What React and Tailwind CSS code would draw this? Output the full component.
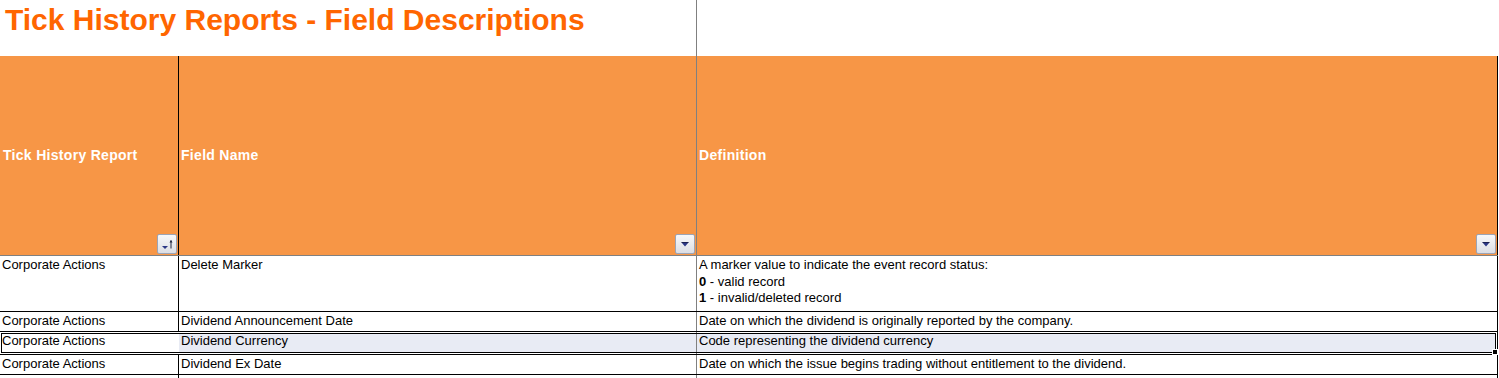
import React from 'react';

const font = "font-['Liberation_Sans',Arial,sans-serif]";

function FilterButton({ sort }) {
  return (
    <div className="absolute bottom-[1px] right-[1px] w-[20px] h-[20px] rounded-[2px] border border-[#9ca4b6] bg-gradient-to-b from-[#f7f8fa] to-[#dcdee4]">
      {sort ? (
        <svg width="18" height="18" viewBox="0 0 18 18">
          <path d="M4 11H10L7 14Z" fill="#2b3785" />
          <path d="M13 5.5V13.5" stroke="#1f2540" strokeWidth="1" />
          <path d="M11.5 7.5L13 5L14.5 7.5Z" fill="#1f2540" />
        </svg>
      ) : (
        <svg width="18" height="18" viewBox="0 0 18 18">
          <path d="M5.5 7.5H12.5L9 11.5Z" fill="#2b3785" />
          <path d="M5.5 7.5H12.5" stroke="#1a2050" strokeWidth="1" />
        </svg>
      )}
    </div>
  );
}

const rows = [
  {
    a: 'Corporate Actions',
    b: 'Delete Marker',
    c: (
      <>
        A marker value to indicate the event record status:
        <br />
        <span className="font-bold">0</span> - valid record
        <br />
        <span className="font-bold">1</span> - invalid/deleted record
      </>
    ),
    h: 'h-[56px]',
  },
  {
    a: 'Corporate Actions',
    b: 'Dividend Announcement Date',
    c: 'Date on which the dividend is originally reported by the company.',
    h: 'h-[20px]',
  },
  {
    a: 'Corporate Actions',
    b: 'Dividend Currency',
    c: 'Code representing the dividend currency',
    h: 'h-[23px]',
    selected: true,
  },
  {
    a: 'Corporate Actions',
    b: 'Dividend Ex Date',
    c: 'Date on which the issue begins trading without entitlement to the dividend.',
    h: 'h-[20px]',
  },
];

function Row({ row }) {
  if (row.selected) {
    return (
      <div className={`relative flex w-[1498px] border-b border-black ${row.h}`}>
        <div className="w-[179px] shrink-0">
          <div className="my-[1px] h-[20px] bg-white pl-[2px] leading-[16.5px] whitespace-nowrap">{row.a}</div>
        </div>
        <div className="w-[518px] shrink-0 border-r border-[#808080]">
          <div className="my-[1px] h-[20px] bg-[#e8ebf4] pl-[2px] leading-[16.5px] whitespace-nowrap">{row.b}</div>
        </div>
        <div className="w-[801px] shrink-0 border-r border-black">
          <div className="my-[1px] mr-[1px] h-[20px] bg-[#e8ebf4] pl-[2px] leading-[16.5px] whitespace-nowrap">{row.c}</div>
        </div>
        {/* selection outline */}
        <div className="pointer-events-none absolute left-[1px] top-[1px] w-[1495px] h-[20px] border border-black" />
        <div className="pointer-events-none absolute left-[1492px] top-[17px] w-[6px] h-[6px] bg-black border border-white" />
      </div>
    );
  }
  return (
    <div className={`flex w-[1498px] border-b border-black ${row.h}`}>
      <div className="w-[179px] shrink-0 border-r border-black pl-[2px] pt-[1px] leading-[16.5px] whitespace-nowrap">{row.a}</div>
      <div className="w-[518px] shrink-0 border-r border-[#808080] pl-[2px] pt-[1px] leading-[16.5px] whitespace-nowrap">{row.b}</div>
      <div className="w-[801px] shrink-0 border-r border-black pl-[2px] pt-[1px] leading-[16.5px] whitespace-nowrap">{row.c}</div>
    </div>
  );
}

export default function App() {
  return (
    <div className={`${font} w-[1499px] h-[378px] overflow-hidden bg-white text-[13px] text-black`}>
      {/* Title */}
      <div className="flex h-[56px]">
        <div className="w-[697px] shrink-0 border-r border-[#808080] pl-[5px] pt-[3px]">
          <h1 className="text-[30px] leading-[34px] font-bold text-[#ff6600] whitespace-nowrap">
            Tick History Reports - Field Descriptions
          </h1>
        </div>
      </div>

      {/* Header */}
      <div className="flex w-[1498px] h-[200px] border-b border-[#808080] bg-[#f79646] text-white font-bold text-[14px] tracking-[0.3px]">
        <div className="relative w-[179px] shrink-0 border-r border-black flex items-center pl-[3px]">
          Tick History Report
          <FilterButton sort />
        </div>
        <div className="relative w-[518px] shrink-0 border-r border-[#808080] flex items-center pl-[2px]">
          Field Name
          <FilterButton />
        </div>
        <div className="relative w-[801px] shrink-0 border-r border-black flex items-center pl-[2px]">
          Definition
          <FilterButton />
        </div>
      </div>

      {rows.map((r, i) => (
        <Row key={i} row={r} />
      ))}

      <div className="flex w-[1498px] h-[10px]">
        <div className="w-[179px] shrink-0 border-r border-black" />
        <div className="w-[518px] shrink-0 border-r border-[#808080]" />
        <div className="w-[801px] shrink-0 border-r border-black" />
      </div>
    </div>
  );
}
